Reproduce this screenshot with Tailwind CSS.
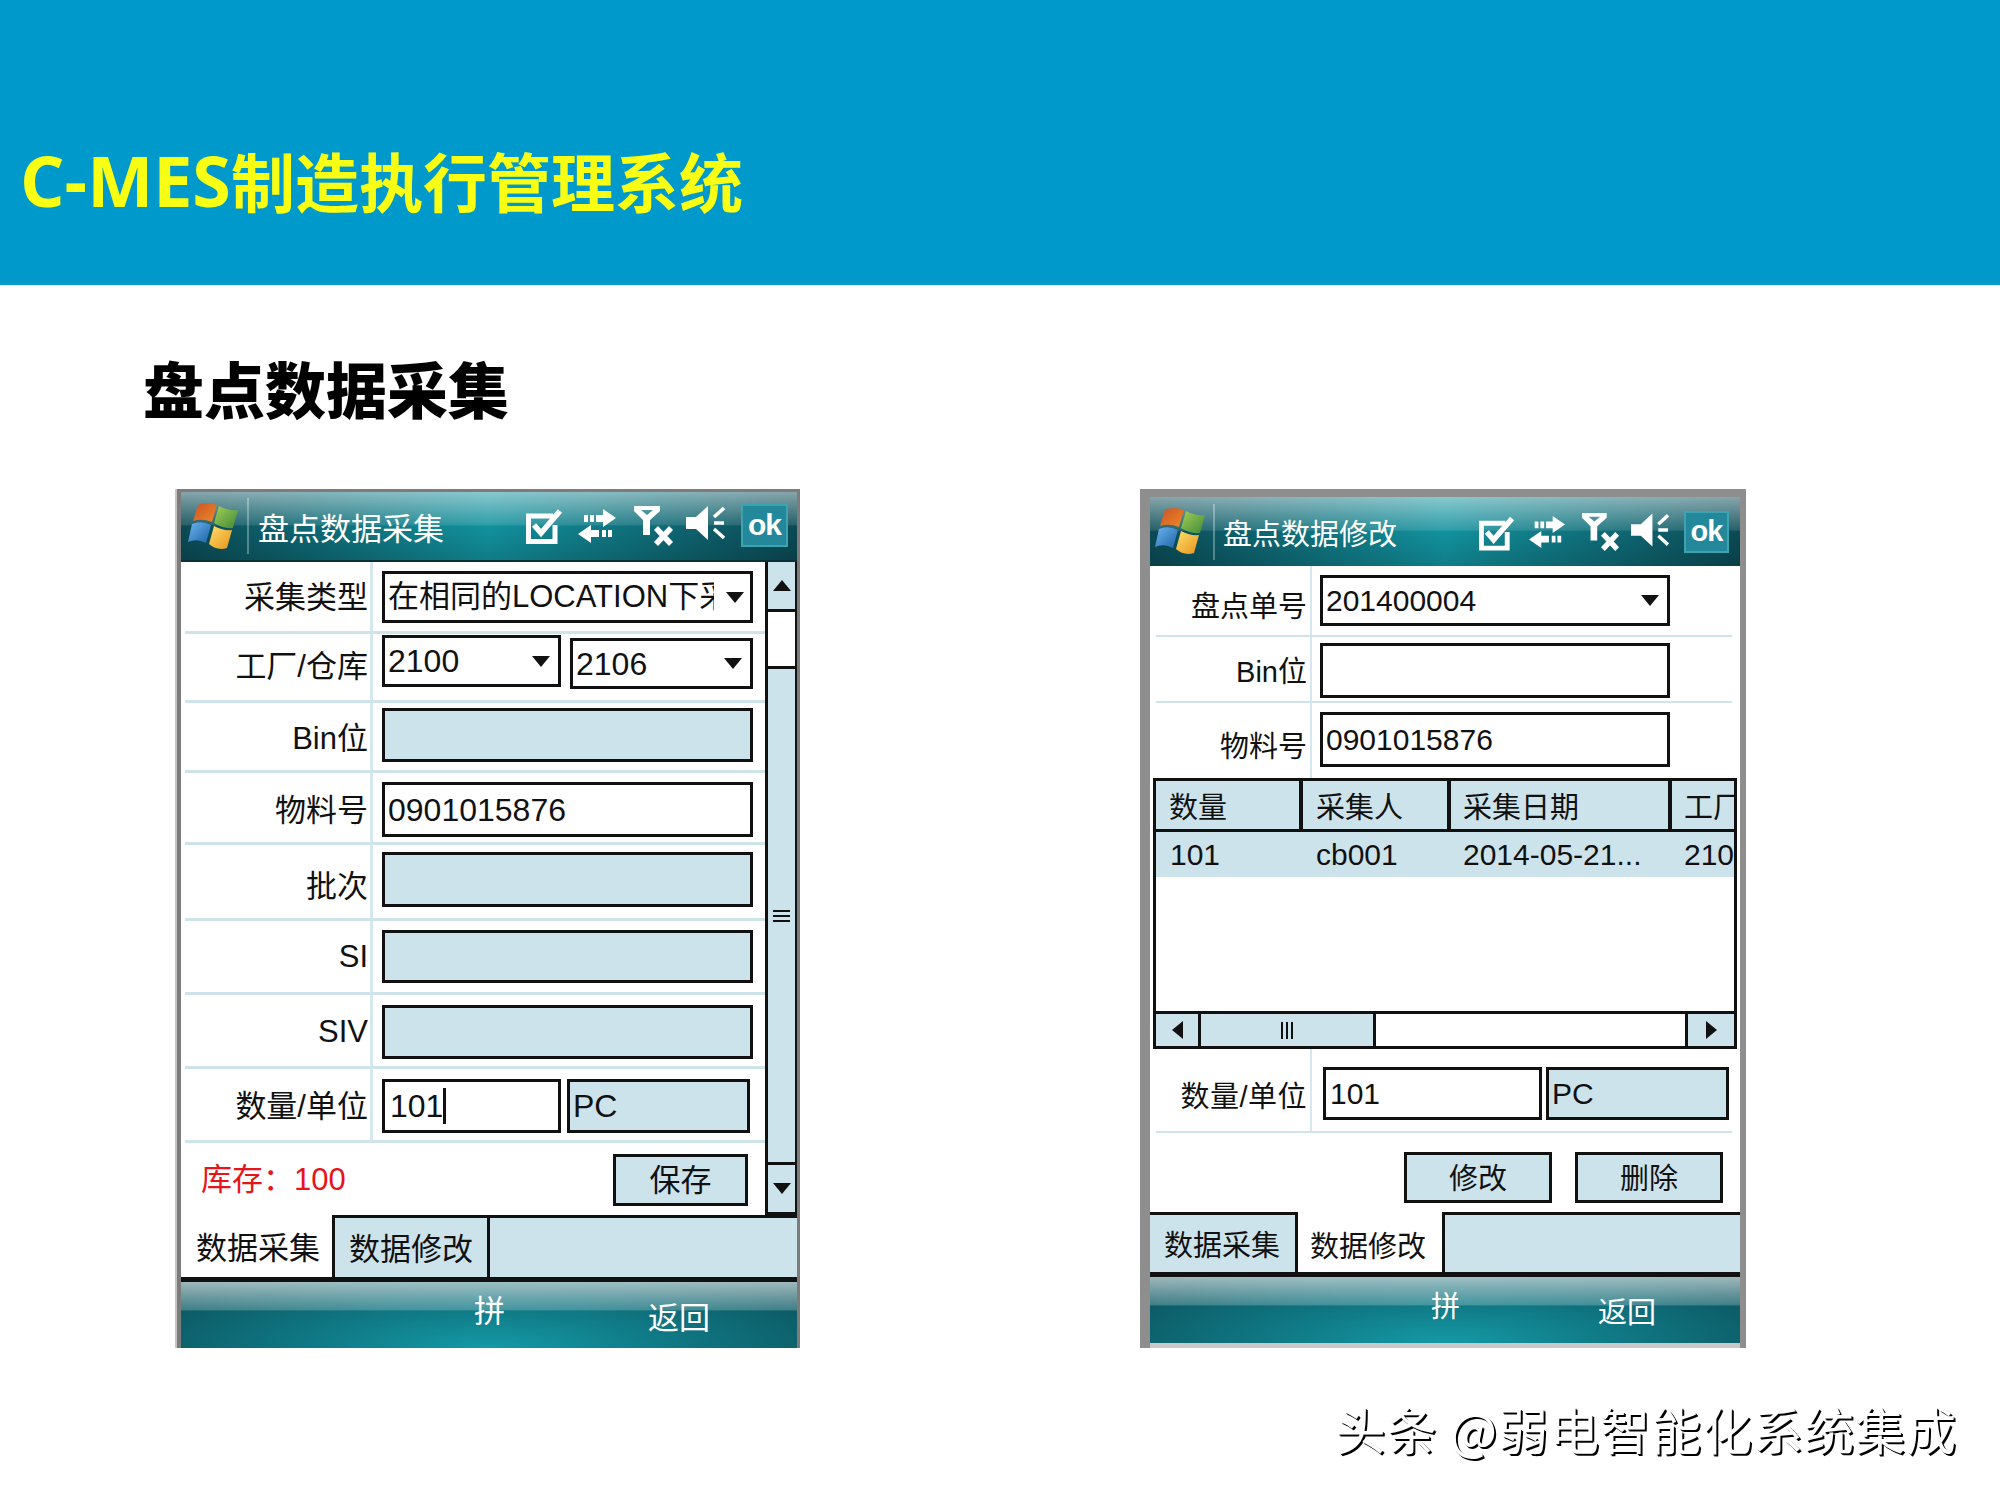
<!DOCTYPE html>
<html lang="zh-CN">
<head>
  <meta charset="UTF-8" />
  <title>C-MES制造执行管理系统</title>
  <script src="https://cdn.jsdelivr.net/npm/@tailwindcss/browser@4"></script>
</head>
<body class="w-[2000px] h-[1500px] bg-white text-[#111] overflow-hidden font-['Liberation_Sans','Noto_Sans_CJK_SC',sans-serif]">

  <!-- Shared icons -->
  <svg class="absolute w-0 h-0">
    <defs>
      <linearGradient id="paneRed" x1="0" y1="0" x2="1" y2="1"><stop offset="0" stop-color="#c9522a"/><stop offset="1" stop-color="#f08a24"/></linearGradient>
      <linearGradient id="paneGreen" x1="0" y1="0" x2="1" y2="1"><stop offset="0" stop-color="#a5cf55"/><stop offset="1" stop-color="#3f8a3a"/></linearGradient>
      <linearGradient id="paneBlue" x1="0" y1="0" x2="1" y2="1"><stop offset="0" stop-color="#6cb5ee"/><stop offset="1" stop-color="#1c62a8"/></linearGradient>
      <linearGradient id="paneYellow" x1="0" y1="0" x2="1" y2="1"><stop offset="0" stop-color="#fbe06a"/><stop offset="1" stop-color="#e9941e"/></linearGradient>
    </defs>
    <symbol id="winLogo" viewBox="0 0 50 49">
      <path d="M10 3Q18 -1 29 3L24 20Q14 16 5 19Z" fill="url(#paneRed)"/>
      <path d="M31 4Q40 9 50 8L45 26Q35 27 26 21Z" fill="url(#paneGreen)"/>
      <path d="M4 22Q13 18 23 23L18 41Q9 36 0 40Z" fill="url(#paneBlue)"/>
      <path d="M26 24Q35 29 44 28L39 46Q29 49 21 42Z" fill="url(#paneYellow)"/>
    </symbol>
    <symbol id="icoTask" viewBox="0 0 37 36">
      <path d="M27 8H2.500V33.500H29V17" fill="none" stroke="#fff" stroke-width="5"/>
      <path d="M8 17L15 25L34 3" fill="none" stroke="#fff" stroke-width="5.500"/>
    </symbol>
    <symbol id="icoSync" viewBox="0 0 38 36" >
      <path fill="#fff" d="M6 7h4v7H6zM12 7h4v7h-4zM18 7h8v7h-8zM25 1l13 9-13 9zM13 17L0 26l13 9zM13 22h8v7h-8zM24 22h4v7h-4zM30 22h4v7h-4z"/>
    </symbol>
    <symbol id="icoSignal" viewBox="0 0 40 40">
      <path fill="#fff" fill-rule="evenodd" d="M0 0H26V5L16 14V29H9V14L0 5ZM7 4H19L13 9Z"/>
      <path d="M22 22L37 38M37 22L22 38" stroke="#fff" stroke-width="5.500"/>
    </symbol>
    <symbol id="icoMute" viewBox="0 0 39 34">
      <path fill="#fff" d="M0 11H10L22 0V34L10 23H0Z"/>
      <path d="M38 2L28 11M28 17H38M28 23L38 32" fill="none" stroke="#fff" stroke-width="3.500"/>
    </symbol>
    <symbol id="caretDown" viewBox="0 0 18 11"><path fill="#111" d="M0 0H18L9 11Z"/></symbol>
    <symbol id="caretUp" viewBox="0 0 18 11"><path fill="#111" d="M0 11H18L9 0Z"/></symbol>
    <symbol id="caretLeft" viewBox="0 0 11 18"><path fill="#111" d="M11 0V18L0 9Z"/></symbol>
    <symbol id="caretRight" viewBox="0 0 11 18"><path fill="#111" d="M0 0V18L11 9Z"/></symbol>
  </svg>

  <!-- Slide header -->
  <header class="h-[285px] bg-[#0099cc] flex items-start pl-[20px] pt-[143px]">
    <h1 class="text-[64px] leading-[80px] font-bold text-[#f8ff14] whitespace-nowrap font-['Open_Sans','Noto_Sans_CJK_SC',sans-serif]"><span class="text-[70px] leading-[70px]">C-MES</span>制造执行管理系统</h1>
  </header>

  <h2 class="h-[204px] pl-[143px] pt-[63px] text-[61px] leading-[80px] font-black text-black font-['Noto_Sans_CJK_SC',sans-serif]">盘点数据采集</h2>

  <main class="flex items-start pl-[177px]">

    <!-- Left phone: data capture -->
    <section class="w-[623px] h-[859px] flex flex-col border-t-[3px] border-x-[4px] border-r-[3px] border-[#7c7c7c] bg-white shadow-[-2px_0_0_#c4c4c4]">
      <div class="h-[70px] shrink-0 flex items-center border-b-2 border-[#0a2f36] pl-[7px] text-white bg-[linear-gradient(180deg,rgba(255,255,255,.5)_0%,rgba(255,255,255,.12)_48%,rgba(255,255,255,0)_50%,rgba(0,0,0,.15)_100%),linear-gradient(90deg,#0b4a55,#12929e_50%,#0b4a55)]">
        <svg class="w-[50px] h-[49px] blur-[0.5px] shrink-0"><use href="#winLogo"/></svg>
        <span class="w-[2px] h-[56px] ml-[9px] bg-white/30"></span>
        <span class="ml-[9px] mt-[7px] text-[31px] leading-none w-[268px]">盘点数据采集</span>
        <svg class="w-[37px] h-[36px]"><use href="#icoTask"/></svg>
        <svg class="w-[38px] h-[36px] ml-[15px]"><use href="#icoSync"/></svg>
        <svg class="w-[40px] h-[40px] ml-[18px]"><use href="#icoSignal"/></svg>
        <svg class="w-[39px] h-[34px] ml-[12px] -mt-[6px]"><use href="#icoMute"/></svg>
        <span class="w-[47px] h-[43px] ml-[16px] -mt-[2px] bg-[#23899a] border-2 border-[#3ea3b1] text-[30px] tracking-[-1px] leading-[38px] font-bold text-center">ok</span>
      </div>

      <div class="flex h-[653px] shrink-0">
        <div class="w-[584px] flex flex-col">
          <!-- form rows -->
          <div class="flex h-[72px] ml-[4px] border-b-[3px] border-[#cfe3ea]">
            <div class="w-[188px] border-r-[3px] border-[#d5e8ef] pr-[2px] pt-[4px] flex items-center justify-end text-[31px]">采集类型</div>
            <div class="pl-[9px] pt-[9px]">
              <div class="w-[371px] h-[52px] border-[3px] border-[#111] flex items-center pl-[3px] text-[31px] relative">
                <span class="w-[326px] overflow-hidden whitespace-nowrap">在相同的LOCATION下采集</span>
                <svg class="w-[18px] h-[11px] ml-[12px]"><use href="#caretDown"/></svg>
              </div>
            </div>
          </div>
          <div class="flex h-[69px] ml-[4px] border-b-[3px] border-[#cfe3ea]">
            <div class="w-[188px] border-r-[3px] border-[#d5e8ef] pr-[2px] pt-[1px] flex items-center justify-end text-[31px]">工厂/仓库</div>
            <div class="pl-[9px] pt-[1px] flex items-start">
              <div class="w-[179px] h-[52px] border-[3px] border-[#111] flex items-center justify-between pl-[3px] pr-[8px] text-[32px]">2100<svg class="w-[18px] h-[11px]"><use href="#caretDown"/></svg></div>
              <div class="w-[183px] h-[51px] ml-[9px] mt-[3px] border-[3px] border-[#111] flex items-center justify-between pl-[3px] pr-[8px] text-[32px]">2106<svg class="w-[18px] h-[11px]"><use href="#caretDown"/></svg></div>
            </div>
          </div>
          <div class="flex h-[70px] ml-[4px] border-b-[3px] border-[#cfe3ea]">
            <div class="w-[188px] border-r-[3px] border-[#d5e8ef] pr-[2px] pt-[5px] flex items-center justify-end text-[31px]">Bin位</div>
            <div class="pl-[9px] pt-[5px]"><div class="w-[371px] h-[54px] border-[3px] border-[#111] bg-[#cde3ec]"></div></div>
          </div>
          <div class="flex h-[72px] ml-[4px] border-b-[3px] border-[#cfe3ea]">
            <div class="w-[188px] border-r-[3px] border-[#d5e8ef] pr-[2px] pt-[7px] flex items-center justify-end text-[31px]">物料号</div>
            <div class="pl-[9px] pt-[9px]"><div class="w-[371px] h-[55px] border-[3px] border-[#111] flex items-center pl-[3px] text-[32px]">0901015876</div></div>
          </div>
          <div class="flex h-[76px] ml-[4px] border-b-[3px] border-[#cfe3ea]">
            <div class="w-[188px] border-r-[3px] border-[#d5e8ef] pr-[2px] pt-[12px] flex items-center justify-end text-[31px]">批次</div>
            <div class="pl-[9px] pt-[7px]"><div class="w-[371px] h-[55px] border-[3px] border-[#111] bg-[#cde3ec]"></div></div>
          </div>
          <div class="flex h-[74px] ml-[4px] border-b-[3px] border-[#cfe3ea]">
            <div class="w-[188px] border-r-[3px] border-[#d5e8ef] pr-[2px] pt-[2px] flex items-center justify-end text-[31px]">SI</div>
            <div class="pl-[9px] pt-[9px]"><div class="w-[371px] h-[53px] border-[3px] border-[#111] bg-[#cde3ec]"></div></div>
          </div>
          <div class="flex h-[74px] ml-[4px] border-b-[3px] border-[#cfe3ea]">
            <div class="w-[188px] border-r-[3px] border-[#d5e8ef] pr-[2px] pt-[4px] flex items-center justify-end text-[31px]">SIV</div>
            <div class="pl-[9px] pt-[10px]"><div class="w-[371px] h-[54px] border-[3px] border-[#111] bg-[#cde3ec]"></div></div>
          </div>
          <div class="flex h-[74px] ml-[4px] border-b-[3px] border-[#cfe3ea]">
            <div class="w-[188px] border-r-[3px] border-[#d5e8ef] pr-[2px] pt-[6px] flex items-center justify-end text-[31px]">数量/单位</div>
            <div class="pl-[9px] pt-[10px] flex items-start">
              <div class="w-[179px] h-[54px] border-[3px] border-[#111] flex items-center pl-[5px] text-[32px]">101<span class="w-[3px] h-[36px] bg-[#111]"></span></div>
              <div class="w-[183px] h-[54px] ml-[6px] border-[3px] border-[#111] bg-[#cde3ec] flex items-center pl-[3px] text-[32px]">PC</div>
            </div>
          </div>
          <!-- stock + save -->
          <div class="flex-1 flex items-start justify-between pl-[20px] pr-[17px]">
            <span class="mt-[17px] text-[31px] leading-[40px] text-[#e8141c]">库存：100</span>
            <button class="mt-[11px] w-[135px] h-[52px] border-[3px] border-[#111] bg-[#cde3ec] text-[31px] leading-none">保存</button>
          </div>
        </div>

        <!-- vertical scrollbar -->
        <div class="w-[32px] flex flex-col border-x-[3px] border-[#111] border-r-2">
          <div class="h-[50px] bg-[#cde3ec] border-b-[3px] border-[#111] flex items-center justify-center"><svg class="w-[18px] h-[11px]"><use href="#caretUp"/></svg></div>
          <div class="h-[54px] bg-white"></div>
          <div class="flex-1 bg-[#cde3ec] border-y-[3px] border-[#111] flex flex-col items-center justify-center gap-[3px]">
            <span class="w-[17px] h-[2px] bg-[#111]"></span><span class="w-[17px] h-[2px] bg-[#111]"></span><span class="w-[17px] h-[2px] bg-[#111]"></span>
          </div>
          <div class="h-[50px] bg-[#cde3ec] flex items-center justify-center border-b-[3px] border-[#111]"><svg class="w-[18px] h-[11px]"><use href="#caretDown"/></svg></div>
        </div>
      </div>

      <!-- tabs -->
      <div class="flex h-[62px] shrink-0 text-[31px]">
        <div class="w-[154px] bg-white border-r-[3px] border-[#111] pl-[15px] pt-[7px] flex items-center whitespace-nowrap">数据采集</div>
        <div class="w-[155px] bg-[#cde3ec] border-t-[3px] border-r-[3px] border-[#111] pl-[14px] pt-[6px] flex items-center whitespace-nowrap">数据修改</div>
        <div class="flex-1 bg-[#cde3ec] border-t-[3px] border-[#111]"></div>
      </div>
      <div class="h-[5px] shrink-0 bg-[#111]"></div>

      <!-- softkey bar -->
      <div class="h-[66px] shrink-0 flex items-center text-white text-[31px] bg-[linear-gradient(180deg,rgba(255,255,255,.6)_0%,rgba(255,255,255,.22)_42%,rgba(255,255,255,0)_44%),radial-gradient(ellipse_at_50%_100%,#149aa6_0%,#0f7682_45%,#0b4d57_100%)]">
        <span class="ml-[293px] -mt-[6px]">拼</span>
        <span class="ml-[143px] mt-[8px]">返回</span>
      </div>
    </section>

    <!-- Right phone: data edit -->
    <section class="w-[606px] h-[859px] ml-[340px] flex flex-col border-t-[8px] border-l-[10px] border-r-[6px] border-[#8e8e8e] bg-white">
      <div class="h-[69px] shrink-0 flex items-center pl-[5px] text-white bg-[linear-gradient(180deg,rgba(255,255,255,.5)_0%,rgba(255,255,255,.12)_48%,rgba(255,255,255,0)_50%,rgba(0,0,0,.15)_100%),linear-gradient(90deg,#0b4a55,#12929e_50%,#0b4a55)]">
        <svg class="w-[50px] h-[49px] blur-[0.5px] shrink-0"><use href="#winLogo"/></svg>
        <span class="w-[2px] h-[56px] ml-[8px] bg-white/30"></span>
        <span class="ml-[8px] text-[29px] leading-none w-[256px] mt-[8px]">盘点数据修改</span>
        <svg class="w-[36px] h-[36px] mt-[2px]"><use href="#icoTask"/></svg>
        <svg class="w-[36px] h-[36px] ml-[14px]"><use href="#icoSync"/></svg>
        <svg class="w-[38px] h-[40px] ml-[17px]"><use href="#icoSignal"/></svg>
        <svg class="w-[38px] h-[34px] ml-[11px] -mt-[3px]"><use href="#icoMute"/></svg>
        <span class="w-[45px] h-[42px] ml-[15px] bg-[#23899a] border-2 border-[#3ea3b1] text-[29px] tracking-[-1px] leading-[36px] font-bold text-center">ok</span>
      </div>

      <div class="flex h-[71px] ml-[6px] mr-[8px] border-b-2 border-[#cfe3ea]">
        <div class="w-[156px] border-r-2 border-[#d5e8ef] pr-[3px] pt-[14px] flex items-center justify-end text-[29px]">盘点单号</div>
        <div class="pl-[8px] pt-[9px]">
          <div class="w-[350px] h-[51px] border-[3px] border-[#111] flex items-center justify-between pl-[3px] pr-[8px] text-[30px]">201400004<svg class="w-[18px] h-[11px]"><use href="#caretDown"/></svg></div>
        </div>
      </div>
      <div class="flex h-[66px] ml-[6px] mr-[8px] border-b-2 border-[#cfe3ea]">
        <div class="w-[156px] border-r-2 border-[#d5e8ef] pr-[3px] pt-[7px] flex items-center justify-end text-[29px]">Bin位</div>
        <div class="pl-[8px] pt-[6px]"><div class="w-[350px] h-[55px] border-[3px] border-[#111]"></div></div>
      </div>
      <div class="flex h-[75px] ml-[6px] mr-[8px]">
        <div class="w-[156px] border-r-2 border-[#d5e8ef] pr-[3px] pt-[15px] flex items-center justify-end text-[29px]">物料号</div>
        <div class="pl-[8px] pt-[9px]"><div class="w-[350px] h-[55px] border-[3px] border-[#111] flex items-center pl-[3px] text-[30px]">0901015876</div></div>
      </div>

      <!-- data grid -->
      <div class="h-[271px] mx-[3px] border-[3px] border-[#111] flex flex-col shrink-0">
        <div class="grid grid-cols-[147px_148px_221px_1fr] h-[51px] bg-[#cde3ec] border-b-[3px] border-[#111] text-[29px]">
          <div class="border-r-[4px] border-[#111] pl-[13px] pt-[6px] flex items-center">数量</div>
          <div class="border-r-[4px] border-[#111] pl-[13px] pt-[6px] flex items-center">采集人</div>
          <div class="border-r-[4px] border-[#111] pl-[12px] pt-[6px] flex items-center">采集日期</div>
          <div class="pl-[12px] pt-[6px] flex items-center overflow-hidden whitespace-nowrap">工厂</div>
        </div>
        <div class="grid grid-cols-[147px_148px_221px_1fr] h-[45px] bg-[#cde3ec] text-[30px] items-center">
          <div class="pl-[14px]">101</div>
          <div class="pl-[13px]">cb001</div>
          <div class="pl-[12px] whitespace-nowrap">2014-05-21...</div>
          <div class="pl-[12px] overflow-hidden whitespace-nowrap">2100</div>
        </div>
        <div class="flex-1"></div>
        <!-- horizontal scrollbar -->
        <div class="h-[35px] border-t-[3px] border-[#111] flex shrink-0">
          <div class="w-[45px] bg-[#cde3ec] border-r-[3px] border-[#111] flex items-center justify-center"><svg class="w-[11px] h-[18px]"><use href="#caretLeft"/></svg></div>
          <div class="w-[175px] bg-[#cde3ec] border-r-[3px] border-[#111] flex items-center justify-center gap-[3px]">
            <span class="w-[2px] h-[17px] bg-[#111]"></span><span class="w-[2px] h-[17px] bg-[#111]"></span><span class="w-[2px] h-[17px] bg-[#111]"></span>
          </div>
          <div class="flex-1 bg-white"></div>
          <div class="w-[49px] bg-[#cde3ec] border-l-[3px] border-[#111] flex items-center justify-center"><svg class="w-[11px] h-[18px]"><use href="#caretRight"/></svg></div>
        </div>
      </div>

      <div class="flex h-[84px] ml-[6px] mr-[8px] border-b-2 border-[#cfe3ea] shrink-0">
        <div class="w-[156px] border-r-2 border-[#d5e8ef] pr-[3px] pt-[16px] flex items-center justify-end text-[29px] tracking-[0.5px] whitespace-nowrap">数量/单位</div>
        <div class="pl-[11px] pt-[18px] flex items-start">
          <div class="w-[219px] h-[53px] border-[3px] border-[#111] flex items-center pl-[4px] text-[30px]">101</div>
          <div class="w-[183px] h-[53px] ml-[4px] border-[3px] border-[#111] bg-[#cde3ec] flex items-center pl-[3px] text-[30px]">PC</div>
        </div>
      </div>
      <div class="h-[79px] shrink-0 flex justify-end items-start gap-[23px] pt-[19px] pr-[17px]">
        <button class="w-[148px] h-[51px] border-[3px] border-[#111] bg-[#cde3ec] text-[29px] leading-none pt-[3px]">修改</button>
        <button class="w-[148px] h-[51px] border-[3px] border-[#111] bg-[#cde3ec] text-[29px] leading-none pt-[3px]">删除</button>
      </div>

      <!-- tabs -->
      <div class="flex h-[60px] shrink-0 text-[29px]">
        <div class="w-[148px] bg-[#cde3ec] border-t-[3px] border-r-[3px] border-[#111] pl-[14px] pt-[6px] flex items-center whitespace-nowrap">数据采集</div>
        <div class="w-[147px] bg-white border-r-[3px] border-[#111] pl-[12px] pt-[11px] flex items-center whitespace-nowrap">数据修改</div>
        <div class="flex-1 bg-[#cde3ec] border-t-[3px] border-[#111]"></div>
      </div>
      <div class="h-[5px] shrink-0 bg-[#111]"></div>

      <!-- softkey bar -->
      <div class="h-[66px] shrink-0 flex items-center text-white text-[29px] bg-[linear-gradient(180deg,rgba(255,255,255,.6)_0%,rgba(255,255,255,.22)_42%,rgba(255,255,255,0)_44%),radial-gradient(ellipse_at_50%_100%,#149aa6_0%,#0f7682_45%,#0b4d57_100%)]">
        <span class="ml-[281px] -mt-[4px]">拼</span>
        <span class="ml-[138px] mt-[8px]">返回</span>
      </div>
      <div class="h-[5px] shrink-0 bg-[#c8c8c8]"></div>
    </section>
  </main>

  <!-- Watermark -->
  <footer class="mt-[55px] pr-[43px] flex justify-end">
    <p class="text-[50px] leading-[50px] tracking-[1px] text-white whitespace-nowrap [text-shadow:2px_2px_0_#000,1px_1px_0_#333] font-['Noto_Sans_CJK_SC',sans-serif]">头条 @弱电智能化系统集成</p>
  </footer>
</body>
</html>
